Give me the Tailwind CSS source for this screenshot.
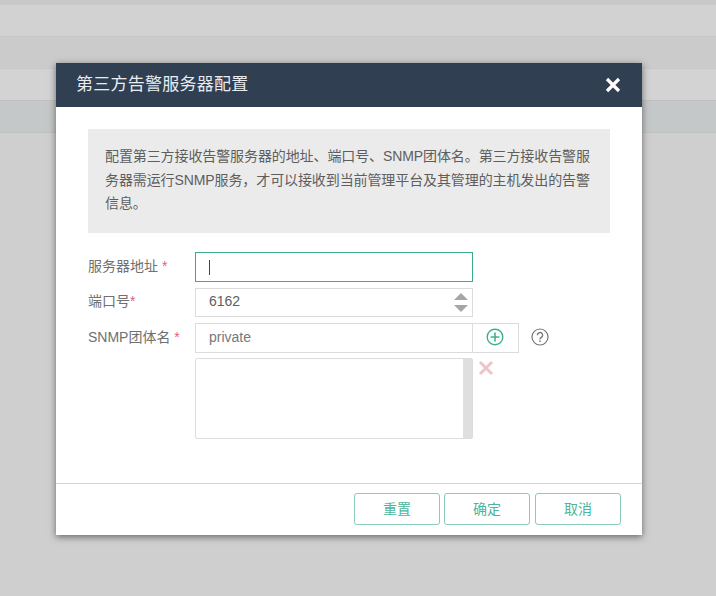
<!DOCTYPE html>
<html lang="zh-CN">
  <head>
    <meta charset="UTF-8" />
    <title>第三方告警服务器配置</title>
    <script src="https://cdn.jsdelivr.net/npm/@tailwindcss/browser@4"></script>
  </head>
  <body class="relative h-[596px] w-[716px] overflow-hidden bg-[#cfcfcf] font-['Liberation_Sans','Noto_Sans_CJK_SC',sans-serif]">
    <!-- page behind the overlay -->
    <div class="flex flex-col">
      <div class="h-[5px] bg-[#c8c8c8]"></div>
      <div class="h-[31px] bg-[#d2d2d2]"></div>
      <div class="h-[32px] border-t border-[#c6c6c6] bg-[#cbcbcb]"></div>
      <div class="h-[32px] border-t border-[#c8c8c8] bg-[#d3d3d3]"></div>
      <div class="h-[33px] border-y border-[#c0c0c0] bg-[#c5c8c8]"></div>
    </div>

    <!-- modal -->
    <div class="absolute left-[56px] top-[63px] flex h-[472px] w-[586px] flex-col bg-white shadow-[0_2px_7px_rgba(0,0,0,0.5)]">
      <div class="flex h-[44px] shrink-0 items-center justify-between bg-[#303f52] pl-[20px] pr-[21px]">
        <span class="text-[17px] tracking-[0.25px] text-[#e8ecf0]">第三方告警服务器配置</span>
        <svg class="h-[16px] w-[16px]" viewBox="0 0 16 16" fill="none" stroke="#fff" stroke-width="3.2">
          <path d="M2 2l12 12M14 2L2 14" />
        </svg>
      </div>

      <div class="flex flex-1 flex-col px-[32px] pt-[22px]">
        <div class="h-[104px] w-[522px] bg-[#ebebeb] pl-[17px] pr-[16px] pt-[16px] text-[14px] leading-[23.5px] tracking-[-0.1px] text-[#5e5e5e]">
          配置第三方接收告警服务器的地址、端口号、SNMP团体名。第三方接收告警服务器需运行SNMP服务，才可以接收到当前管理平台及其管理的主机发出的告警信息。
        </div>

        <div class="mt-[19px] flex flex-col text-[14px] text-[#707070]">
          <div class="flex items-center">
            <label class="w-[107px] pb-[2px]">服务器地址 <span class="text-[#e0607e]">*</span></label>
            <div class="flex h-[30px] w-[278px] items-center border border-[#3fa98c] pl-[13px]">
              <span class="h-[15px] w-px bg-[#444]"></span>
            </div>
          </div>

          <div class="mt-[6px] flex items-center">
            <label class="w-[107px] pb-[2px]">端口号<span class="text-[#e0607e]">*</span></label>
            <div class="flex h-[29px] w-[278px] items-center justify-between border border-[#dcdcdc] pl-[13px] pr-[4px] text-[#5e5e5e]">
              <span class="pb-[2px]">6162</span>
              <div class="flex flex-col gap-[5px]">
                <div class="h-0 w-0 border-x-[7px] border-b-[7px] border-x-transparent border-b-[#a6a6a6]"></div>
                <div class="h-0 w-0 border-x-[7px] border-t-[7px] border-x-transparent border-t-[#a6a6a6]"></div>
              </div>
            </div>
          </div>

          <div class="mt-[6px] flex items-center">
            <label class="w-[107px] pb-[2px]">SNMP团体名 <span class="text-[#e0607e]">*</span></label>
            <div class="flex h-[30px] w-[278px] items-center border border-[#dcdcdc] pb-[2px] pl-[13px] text-[#777]">private</div>
            <div class="flex h-[30px] w-[46px] items-center justify-center border-y border-r border-[#dcdcdc] pb-[2px] pr-[2px]">
              <svg class="h-[18px] w-[18px]" viewBox="0 0 18 18" fill="none" stroke="#3fb08f">
                <circle cx="9" cy="9" r="7.8" stroke-width="1.4" />
                <path d="M9 4.6v8.8M4.6 9h8.8" stroke-width="1.6" />
              </svg>
            </div>
            <svg class="mb-[2px] ml-[12px] h-[18px] w-[18px]" viewBox="0 0 18 18" fill="none" stroke="#777">
              <circle cx="9" cy="9" r="8" stroke-width="1.2" />
              <path d="M6.4 7.2a2.6 2.6 0 1 1 3.9 2.2c-.9.5-1.3 1-1.3 2" stroke-width="1.3" />
              <path d="M9 12.6v1.4" stroke-width="1.4" />
            </svg>
          </div>

          <div class="mt-[5px] flex items-start">
            <div class="ml-[107px] flex h-[81px] w-[278px] justify-end rounded-[2px] border border-[#dcdcdc]">
              <div class="w-[9px] bg-[#dfdfdf]"></div>
            </div>
            <svg class="ml-[5px] mt-[2px] h-[16px] w-[16px]" viewBox="0 0 16 16" fill="none" stroke="#eec4cc" stroke-width="3">
              <path d="M2 2l12 12M14 2L2 14" />
            </svg>
          </div>
        </div>
      </div>

      <div class="flex h-[52px] shrink-0 items-start gap-[4px] border-t border-[#d4d4d4] pl-[298px] pt-[9px] text-[14px] text-[#4cb59a]">
        <button class="h-[32px] w-[86px] rounded-[3px] border border-[#8accb9]">重置</button>
        <button class="h-[32px] w-[86px] rounded-[3px] border border-[#8accb9]">确定</button>
        <button class="ml-[1px] h-[32px] w-[86px] rounded-[3px] border border-[#8accb9]">取消</button>
      </div>
    </div>
  </body>
</html>
